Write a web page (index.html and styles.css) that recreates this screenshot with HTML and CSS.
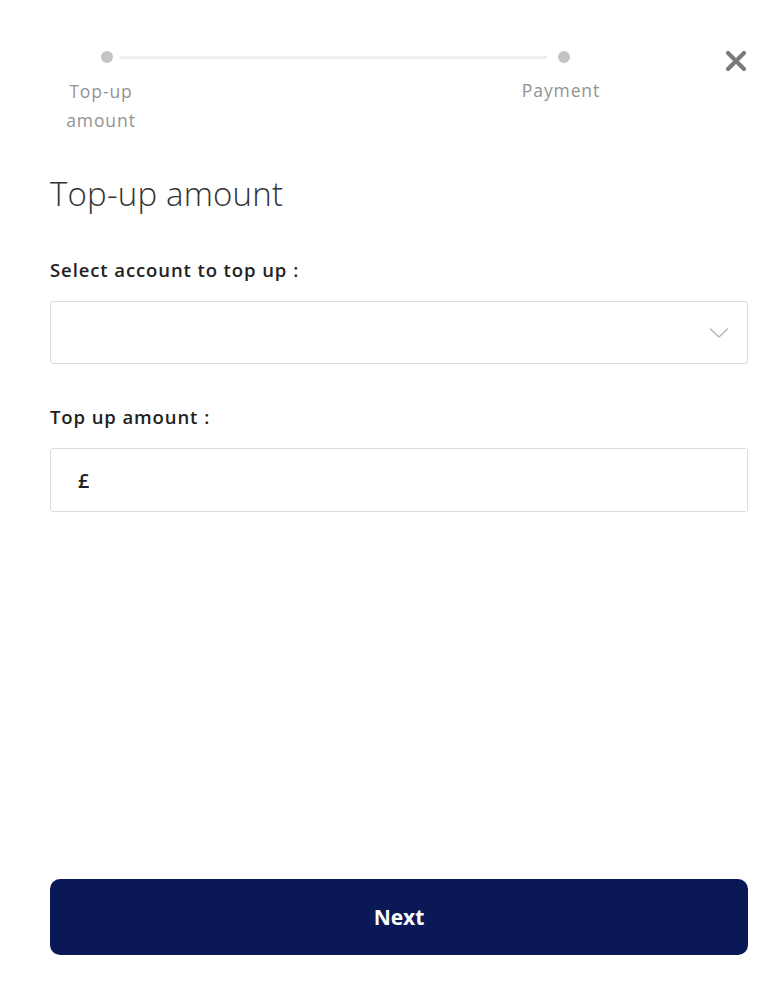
FILE: index.html
```html
<!DOCTYPE html>
<html lang="en">
<head>
    <meta charset="UTF-8">
    <meta name="viewport" content="width=device-width, initial-scale=1.0">
    <title>Top-up</title>
    <link rel="stylesheet" href="styles.css">
</head>
<body>
    <main class="topup">
        <header class="topup-header">
            <div class="stepper">
                <span class="step-dot step-dot-first"></span>
                <span class="step-line"></span>
                <span class="step-dot step-dot-last"></span>
                <span class="step-label">Top-up amount</span>
                <span class="step-label step-label-last">Payment</span>
            </div>
            <button class="close" aria-label="Close">
                <svg width="22" height="22" viewBox="0 0 22 22">
                    <path d="M3 3 L19 19 M19 3 L3 19" stroke="#7a7a7a" stroke-width="4.2" stroke-linecap="round"/>
                </svg>
            </button>
        </header>

        <h1 class="title">Top-up amount</h1>

        <form class="topup-form" onsubmit="return false">
            <label class="field-label" for="account">Select account to top up<span class="colon">:</span></label>
            <div class="select-box">
                <select id="account"></select>
                <svg class="chevron" width="20" height="12" viewBox="0 0 20 12">
                    <path d="M1 1.5 L10 10 L19 1.5" fill="none" stroke="#b5b5b5" stroke-width="1.4"/>
                </svg>
            </div>

            <label class="field-label" for="amount">Top up amount<span class="colon">:</span></label>
            <div class="amount-box">
                <span class="currency">£</span>
                <input type="text" id="amount">
            </div>
        </form>

        <button class="next-btn">Next</button>
    </main>
</body>
</html>
```

FILE: styles.css
```css
body {
    margin: 0;
    padding: 0;
    background-color: #fff;
    font-family: "Open Sans", Arial, sans-serif;
    color: #222;
}

.topup {
    box-sizing: border-box;
    height: 985px;
    padding: 51px 32px 30px 50px;
    display: flex;
    flex-direction: column;
}

.topup-header {
    display: flex;
    justify-content: space-between;
    align-items: flex-start;
}

.stepper {
    display: grid;
    grid-template-columns: 80px 382px 80px;
    grid-template-rows: 12px auto;
    row-gap: 14px;
    margin-left: 11px;
}

.step-dot {
    width: 12px;
    height: 12px;
    border-radius: 50%;
    background-color: #c4c4c4;
    justify-self: center;
}

.step-dot-first {
    margin-left: 12px;
}

.step-dot-last {
    grid-column: 3;
    margin-left: 1px;
}

.step-line {
    align-self: center;
    height: 3px;
    background-color: #eeeeee;
    margin: 0 -24px 0 -21px;
}

.step-label {
    grid-row: 2;
    grid-column: 1;
    text-align: center;
    font-size: 17.5px;
    letter-spacing: 0.9px;
    line-height: 29px;
    color: #939393;
}

.step-label-last {
    grid-column: 3;
    margin: -1px -4px 0 -8px;
}

.close {
    border: none;
    background: none;
    padding: 0;
    margin: -1px 1px 0 0;
    cursor: pointer;
}

.title {
    margin: 39px 0 0;
    font-size: 33px;
    font-weight: 300;
    letter-spacing: 0.2px;
    line-height: 40px;
    color: #333;
}

.topup-form {
    display: flex;
    flex-direction: column;
}

.field-label {
    font-size: 18.5px;
    font-weight: 600;
    letter-spacing: 0.9px;
    line-height: 26px;
    color: #222;
    margin-top: 43px;
}

.colon {
    margin-left: 6px;
}

.select-box,
.amount-box {
    position: relative;
    box-sizing: border-box;
    height: 64px;
    margin-top: 18px;
    border: 1px solid #dcdcdc;
    border-radius: 3px;
    display: flex;
    align-items: center;
}

.select-box {
    height: 63px;
}

.select-box + .field-label {
    margin-top: 40px;
}

.select-box select {
    appearance: none;
    border: none;
    background: transparent;
    width: 100%;
    height: 100%;
}

.chevron {
    position: absolute;
    right: 18px;
    top: 25px;
}

.currency {
    padding-left: 27px;
    font-size: 20px;
    font-weight: 600;
    color: #222;
}

.amount-box input {
    flex: 1;
    border: none;
    outline: none;
    height: 100%;
    font-size: 18px;
    font-family: inherit;
    padding: 0 10px;
}

.next-btn {
    margin-top: auto;
    height: 76px;
    border: none;
    border-radius: 10px;
    background-color: #0a1855;
    color: #fff;
    font-family: inherit;
    font-size: 21px;
    font-weight: 700;
    cursor: pointer;
}
```
